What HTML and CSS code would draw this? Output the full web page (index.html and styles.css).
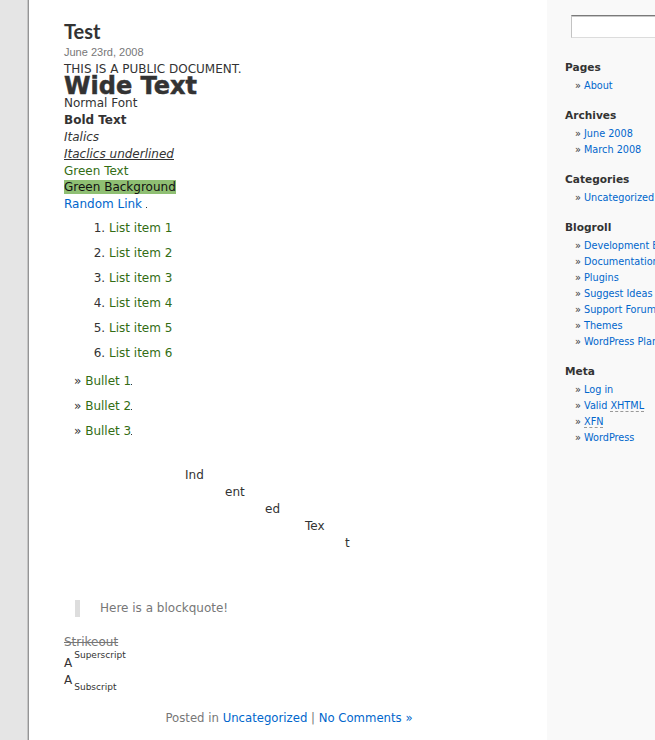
FILE: index.html
```html
<html>
<head>
<title>Test</title>
<link rel="stylesheet" href="styles.css">
</head>
<body>

<div id="page">

<div id="content">
	<div class="post">
		<h2 class="post-title">Test</h2>
		<small class="post-date">June 23rd, 2008</small>

		<div class="entry">
			<p class="lines">
				THIS IS A PUBLIC DOCUMENT.<br>
				<span class="wide">Wide Text</span><br>
				Normal Font<br>
				<strong>Bold Text</strong><br>
				<em>Italics</em><br>
				<em><u>Itaclics underlined</u></em><br>
				<span class="green">Green Text</span><br>
				<span class="green-bg">Green Background</span><br>
				<a href="#">Random Link</a> <span class="dot"></span>
			</p>

			<ol class="numbered">
				<li><span class="green">List item 1</span></li>
				<li><span class="green">List item 2</span></li>
				<li><span class="green">List item 3</span></li>
				<li><span class="green">List item 4</span></li>
				<li><span class="green">List item 5</span></li>
				<li><span class="green">List item 6</span></li>
			</ol>

			<ul class="bullets">
				<li><span class="green">Bullet 1</span><span class="dot"></span></li>
				<li><span class="green">Bullet 2</span><span class="dot"></span></li>
				<li><span class="green">Bullet 3</span><span class="dot"></span></li>
			</ul>

			<div class="indent first">Ind
				<div class="indent">ent
					<div class="indent">ed
						<div class="indent">Tex
							<div class="indent">t</div>
						</div>
					</div>
				</div>
			</div>

			<blockquote>Here is a blockquote!</blockquote>

			<div class="line"><del>Strikeout</del></div>
			<div class="line sup-line">A<sup>Superscript</sup></div>
			<div class="line">A<sub>Subscript</sub></div>
		</div>

		<p class="postmetadata">Posted in <a href="#">Uncategorized</a> | <a href="#">No Comments &raquo;</a></p>
	</div>
</div>

<div id="sidebar">
	<form class="searchform"><input type="text" class="search-box"></form>

	<div class="widget">
		<h2>Pages</h2>
		<ul>
			<li><a href="#">About</a></li>
		</ul>
	</div>

	<div class="widget">
		<h2>Archives</h2>
		<ul>
			<li><a href="#">June 2008</a></li>
			<li><a href="#">March 2008</a></li>
		</ul>
	</div>

	<div class="widget">
		<h2>Categories</h2>
		<ul>
			<li><a href="#">Uncategorized</a></li>
		</ul>
	</div>

	<div class="widget">
		<h2>Blogroll</h2>
		<ul>
			<li><a href="#">Development Blog</a></li>
			<li><a href="#">Documentation</a></li>
			<li><a href="#">Plugins</a></li>
			<li><a href="#">Suggest Ideas</a></li>
			<li><a href="#">Support Forum</a></li>
			<li><a href="#">Themes</a></li>
			<li><a href="#">WordPress Planet</a></li>
		</ul>
	</div>

	<div class="widget">
		<h2>Meta</h2>
		<ul>
			<li><a href="#">Log in</a></li>
			<li><a href="#">Valid <abbr>XHTML</abbr></a></li>
			<li><a href="#"><abbr>XFN</abbr></a></li>
			<li><a href="#">WordPress</a></li>
		</ul>
	</div>
</div>

</div>
</body>
</html>
```

FILE: styles.css
```css
body {
	margin: 0;
	padding: 0;
	background-color: #e5e5e5;
	overflow: hidden;
	color: #333;
	font-family: "DejaVu Sans", Verdana, sans-serif;
}
a {
	color: #06c;
	text-decoration: none;
}

#page {
	display: flex;
	margin-left: 28px;
	width: 760px;
	min-height: 740px;
	border-left: 1px solid #959596;
	box-shadow: -1px 0 0 #c4c4c4;
}

/* main column */
#content {
	width: 483px;
	padding-left: 35px;
	background-color: #fff;
}
.post {
	width: 450px;
	font-size: 12px;
	line-height: 16.9px;
}
.post-title {
	margin: 0;
	padding-top: 19px;
	font-family: Lato, "Liberation Sans", sans-serif;
	font-size: 20px;
	font-weight: bold;
	line-height: 24px;
	color: #333;
}
.post-date {
	display: block;
	font-family: "Liberation Sans", Arial, sans-serif;
	font-size: 11px;
	line-height: 18px;
	color: #777;
}
.lines {
	margin: 0;
}
.wide {
	font-size: 24px;
	font-weight: bold;
	line-height: 17px;
	-webkit-text-stroke: 0.5px #333;
}
.green {
	color: #336d14;
}
.green-bg {
	background-color: #8fbf73;
	color: #111;
}
.dot {
	display: inline-block;
	width: 1px;
	height: 1px;
	background-color: #333;
}

.numbered {
	margin: 0;
	padding-left: 35px;
}
.numbered li, .bullets li {
	margin: 7px 0 8px 10px;
}
.bullets {
	margin: 11px 0 0;
	padding: 0;
	list-style: none;
}
.bullets li:before {
	content: "\00BB \0020";
}

.indent {
	padding-left: 40px;
}
.indent.first {
	margin-top: 28px;
	padding-left: 121px;
}

blockquote {
	margin: 48px 0 0 11px;
	padding-left: 20px;
	border-left: 5px solid #ddd;
	color: #777;
}

.line del {
	color: #777;
}
.post del {
	display: inline-block;
	margin-top: 17px;
}
.sup-line {
	padding-top: 4px;
}
sup, sub {
	margin-left: 2px;
	font-size: 9px;
	line-height: 0;
}
sup {
	vertical-align: 9px;
}
sub {
	vertical-align: -6px;
}

.postmetadata {
	margin: 21px 0 0;
	text-align: center;
	font-size: 11.7px;
	color: #777;
}

/* sidebar */
#sidebar {
	flex: 1;
	padding-left: 18px;
	background-color: #f9f9f9;
	font-size: 9.7px;
	line-height: 16px;
}
.searchform {
	margin: 0;
	padding: 15px 0 0 6px;
}
.search-box {
	display: block;
	width: 150px;
	height: 23px;
	box-sizing: border-box;
	border: 1px solid #c3c3c3;
	border-top-color: #7a7a7a;
	border-bottom-color: #dcdcdc;
	box-shadow: inset 0 1px 0 #c8c8c8;
	background-color: #fff;
}
.widget {
	margin-top: 21px;
}
.widget + .widget {
	margin-top: 13px;
}
.widget h2 {
	margin: 0;
	font-size: 10.6px;
	font-weight: bold;
	line-height: 16px;
}
.widget ul {
	margin: 3px 0 0;
	padding-left: 10px;
	list-style: none;
	white-space: nowrap;
}
.widget li:before {
	content: "\00BB \0020";
}
abbr {
	text-decoration: none;
	border-bottom: 1px dashed #999;
}
```
